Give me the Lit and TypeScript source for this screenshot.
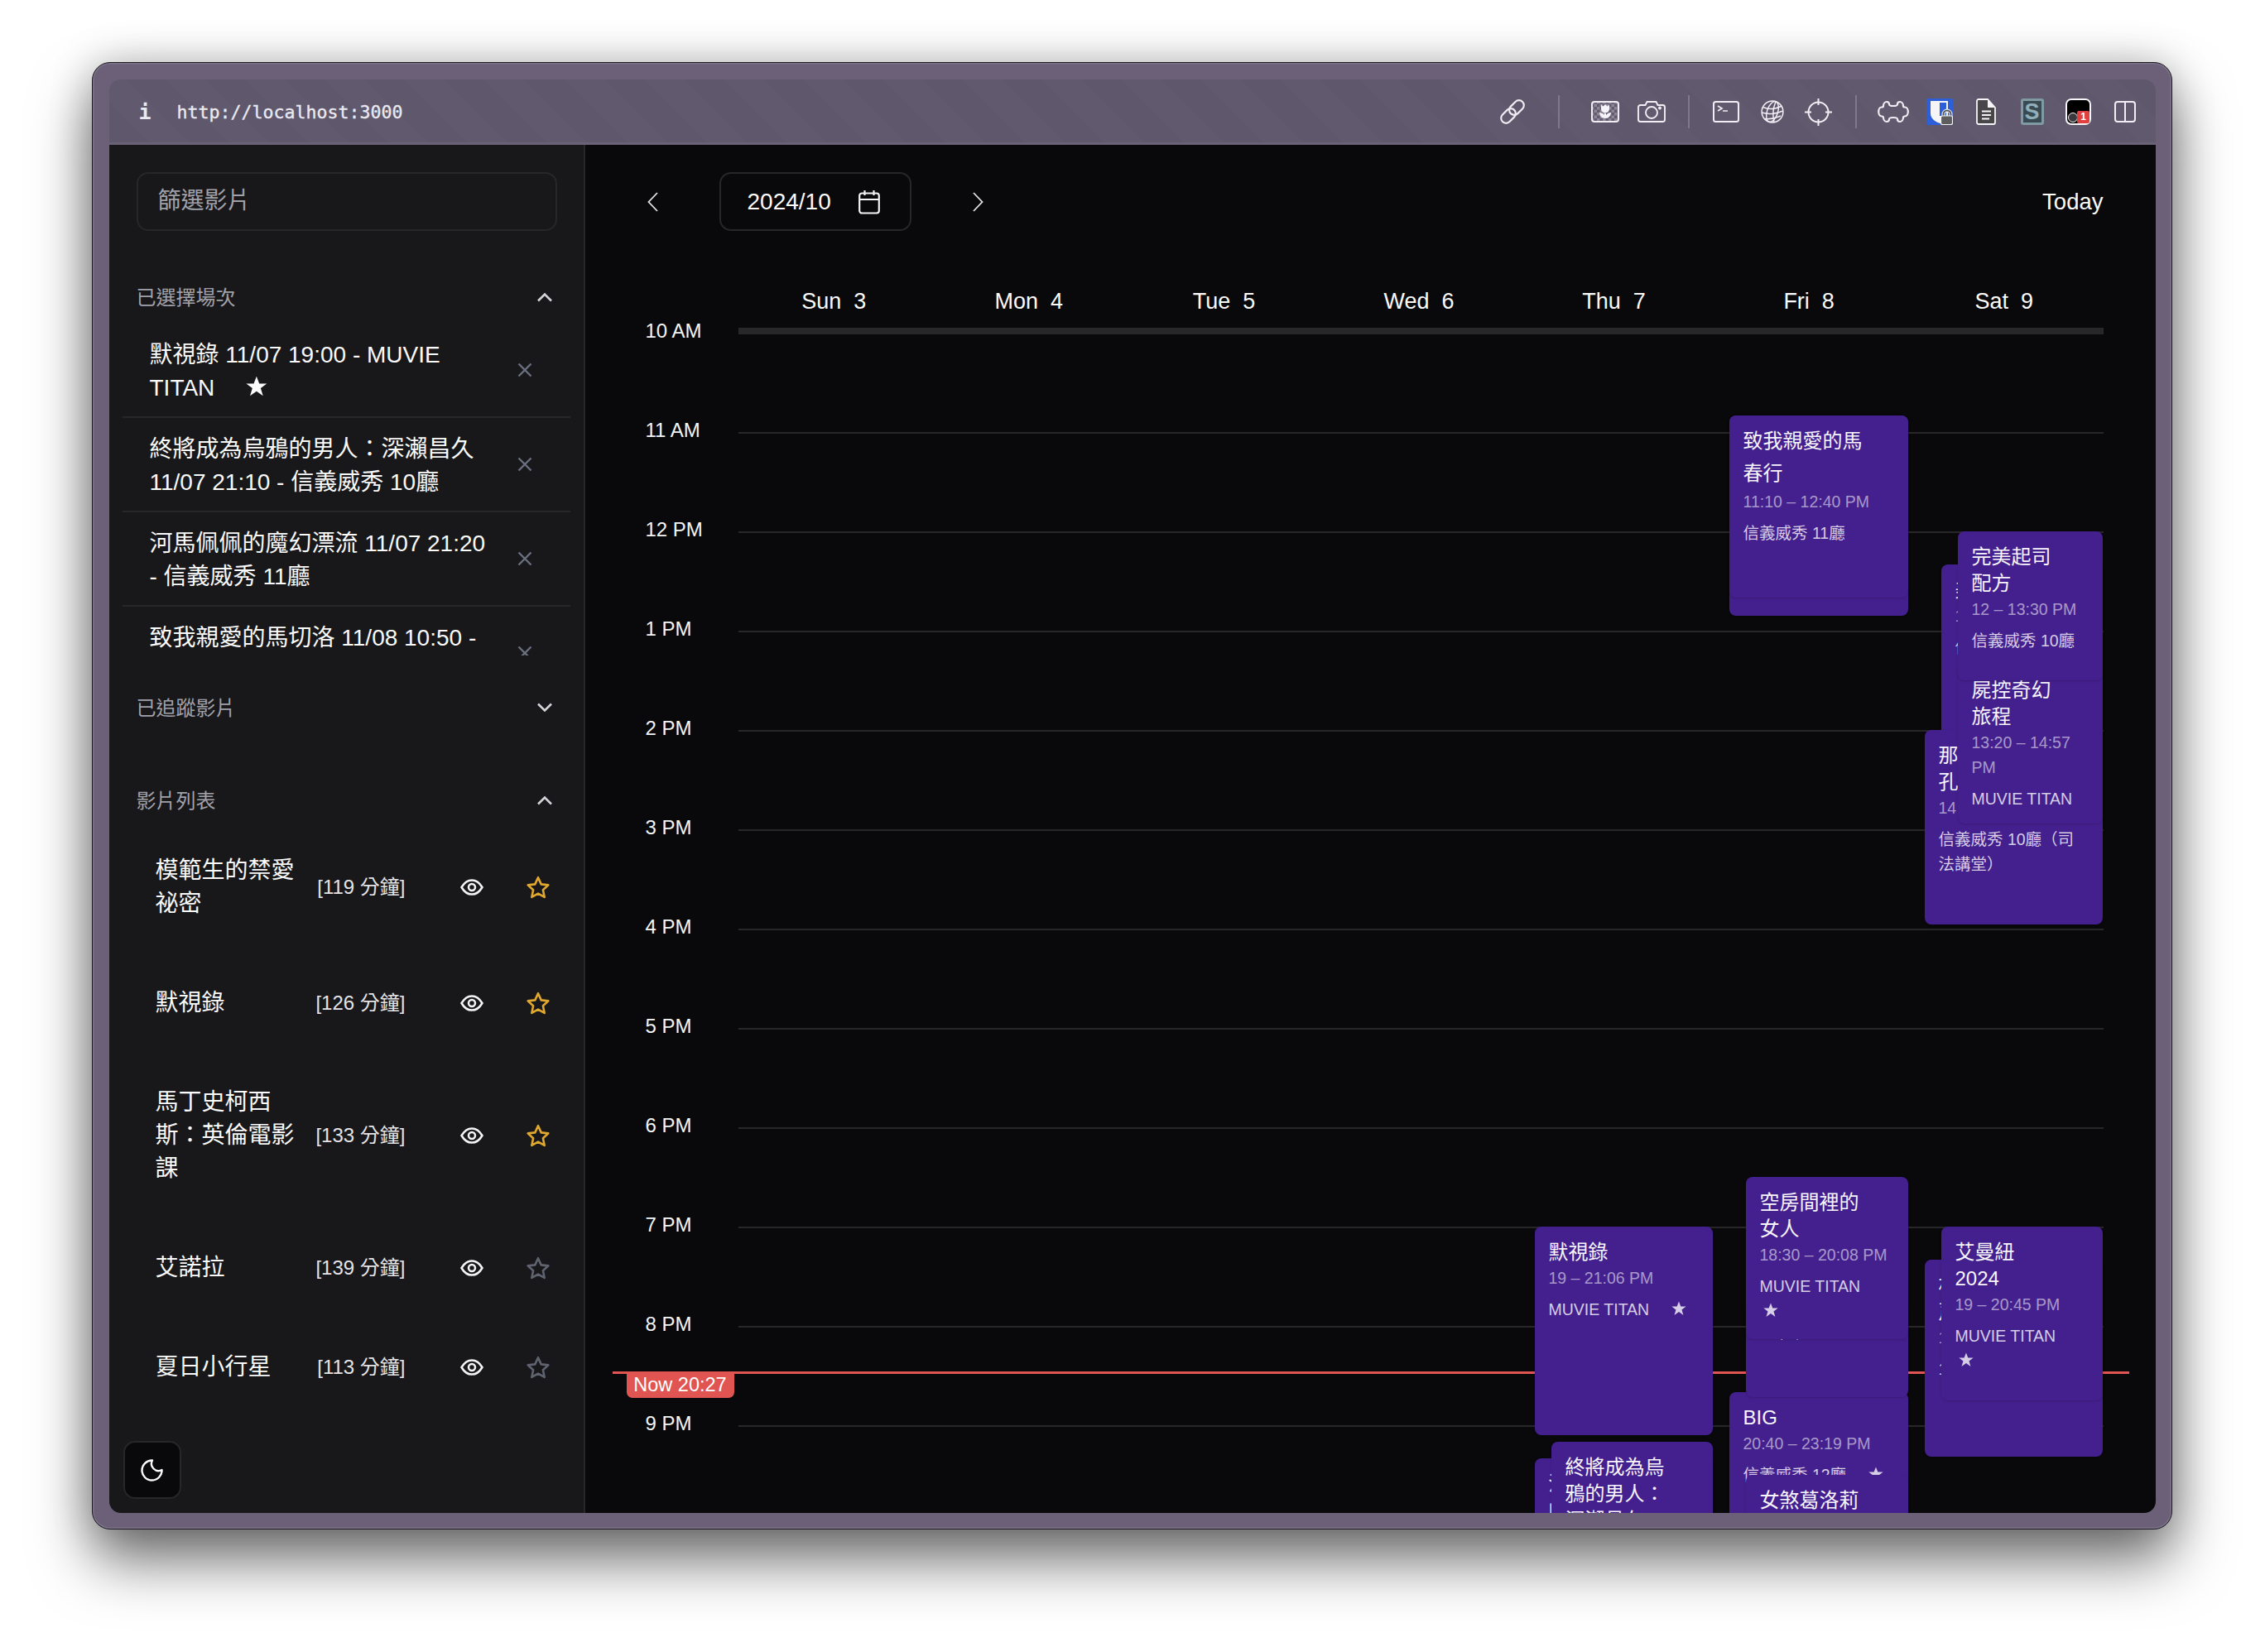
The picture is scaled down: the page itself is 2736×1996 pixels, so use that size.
import { LitElement, html, css, svg } from 'lit';
import { customElement } from 'lit/decorators.js';

// origin of the calendar canvas inside the page
const ORIGIN_X = 707;
const ORIGIN_Y = 396;

const HOURS = ['10 AM', '11 AM', '12 PM', '1 PM', '2 PM', '3 PM', '4 PM', '5 PM', '6 PM', '7 PM', '8 PM', '9 PM'];
const DAYS = ['Sun  3', 'Mon  4', 'Tue  5', 'Wed  6', 'Thu  7', 'Fri  8', 'Sat  9'];

const SELECTED = [
  { text: '默視錄 11/07 19:00 - MUVIE TITAN', star: true },
  { text: '終將成為烏鴉的男人：深瀨昌久 11/07 21:10 - 信義威秀 10廳', star: false },
  { text: '河馬佩佩的魔幻漂流 11/07 21:20 - 信義威秀 11廳', star: false },
  { text: '致我親愛的馬切洛 11/08 10:50 - 信義威秀 11廳', star: false },
];

const FILMS = [
  { title: '模範生的禁愛祕密', mins: '[119 分鐘]', fav: true },
  { title: '默視錄', mins: '[126 分鐘]', fav: true },
  { title: '馬丁史柯西斯：英倫電影課', mins: '[133 分鐘]', fav: true },
  { title: '艾諾拉', mins: '[139 分鐘]', fav: false },
  { title: '夏日小行星', mins: '[113 分鐘]', fav: false },
];

interface CalEvent {
  x: number;
  y: number;
  w: number;
  h: number;
  title?: string[];
  time?: string;
  venue?: string;
  star?: boolean;
  pad?: number;
  lh?: number;
}

// painted in order, later ones lie over earlier ones
const EVENTS: CalEvent[] = [
  { x: 2089, y: 502, w: 216, h: 242 },
  { x: 2089, y: 502, w: 216, h: 220, title: ['致我親愛的馬', '春行'], time: '11:10 – 12:40 PM', venue: '信義威秀 11廳', pad: 11, lh: 39 },

  { x: 2345, y: 682, w: 195, h: 300, title: ['美'], time: '1', venue: '信義威秀 10廳（司法講堂）' },
  { x: 2325, y: 882, w: 215, h: 235, title: ['那', '孔'], time: '14', venue: '信義威秀 10廳（司法講堂）' },
  { x: 2365, y: 803, w: 175, h: 192, title: ['屍控奇幻', '旅程'], time: '13:20 – 14:57 PM', venue: 'MUVIE TITAN' },
  { x: 2365, y: 642, w: 175, h: 180, title: ['完美起司', '配方'], time: '12 – 13:30 PM', venue: '信義威秀 10廳' },

  { x: 1854, y: 1482, w: 215, h: 252, title: ['默視錄'], time: '19 – 21:06 PM', venue: 'MUVIE TITAN', star: true },
  { x: 1854, y: 1762, w: 215, h: 200, title: ['河馬佩佩', '的魔幻漂流'], time: '21:20 – 23:00 PM' },
  { x: 1874, y: 1742, w: 195, h: 200, title: ['終將成為烏', '鴉的男人：', '深瀨昌久'] },

  { x: 2089, y: 1682, w: 216, h: 200, title: ['BIG'], time: '20:40 – 23:19 PM', venue: '信義威秀 12廳', star: true },
  { x: 2109, y: 1578, w: 196, h: 110, title: ['二人'] },
  { x: 2109, y: 1422, w: 196, h: 196, title: ['空房間裡的', '女人'], time: '18:30 – 20:08 PM', venue: 'MUVIE TITAN', star: true },
  { x: 2109, y: 1782, w: 196, h: 200, title: ['女煞葛洛莉'] },

  { x: 2325, y: 1522, w: 215, h: 238, title: ['相', '声'], time: '1', venue: '1' },
  { x: 2345, y: 1482, w: 195, h: 210, title: ['艾曼紐', '2024'], time: '19 – 20:45 PM', venue: 'MUVIE TITAN', star: true },
];

const starFilled = svg`<svg class="inline-star" viewBox="0 0 24 24"><path fill="currentColor" d="M12 .8l3.1 8h8.500l-6.900 5.200 2.600 8.600L12 17.400l-7.300 5.200 2.600-8.600L.4 8.800h8.500z"/></svg>`;
const starOutline = svg`<svg viewBox="0 0 30 28" width="30" height="28"><path fill="none" stroke="currentColor" stroke-width="2.600" stroke-linejoin="round" d="M15 2.200l3.700 8.200 8.600 1-6.400 5.900 1.800 8.600L15 21.600l-7.700 4.300 1.800-8.600-6.400-5.900 8.600-1z"/></svg>`;
const eye = svg`<svg viewBox="0 0 28 20" width="28" height="20" fill="none" stroke="#f4f4f5" stroke-width="2.500"><path d="M1.500 10C5 4 9 1.400 14 1.400S23 4 26.500 10C23 16 19 18.600 14 18.600S5 16 1.500 10Z"/><circle cx="14" cy="10" r="4"/></svg>`;
const cross = svg`<svg viewBox="0 0 18 18" width="18" height="18"><path d="M1.500 1.500l15 15M16.500 1.500l-15 15" stroke="#6b7080" stroke-width="2.400" fill="none"/></svg>`;
const chevUp = svg`<svg viewBox="0 0 20 12" width="20" height="12"><path d="M2 10.500l8-8 8 8" stroke="#d4d4d8" stroke-width="2.600" fill="none"/></svg>`;
const chevDown = svg`<svg viewBox="0 0 20 12" width="20" height="12"><path d="M2 1.500l8 8 8-8" stroke="#d4d4d8" stroke-width="2.600" fill="none"/></svg>`;
const moon = svg`<svg viewBox="0 0 28 28" width="28" height="28"><path d="M14 2.500a8.500 8.500 0 0 0 11.500 11.500A12 12 0 1 1 14 2.500Z" stroke="#fafafa" stroke-width="2.400" fill="none" stroke-linejoin="round"/></svg>`;
const calendar = svg`<svg viewBox="0 0 26 30" width="26" height="30" fill="none" stroke="#f4f4f5" stroke-width="2.200"><rect x="1.200" y="4.500" width="23.600" height="24" rx="3"/><path d="M1.200 12h23.600M7.500 1v6M18.500 1v6"/></svg>`;
const prevIcon = svg`<svg viewBox="0 0 13 24" width="13" height="24"><path d="M12 1L1.500 12 12 23" stroke="#e4e4e7" stroke-width="1.800" fill="none"/></svg>`;
const nextIcon = svg`<svg viewBox="0 0 13 24" width="13" height="24"><path d="M1 1l10.500 11L1 23" stroke="#e4e4e7" stroke-width="1.800" fill="none"/></svg>`;

const tb = {
  link: svg`<svg viewBox="0 0 30 30" width="30" height="30" fill="none" stroke="#eeecf2" stroke-width="2.200"><g transform="rotate(-45 15 15)"><rect x="-2" y="9" width="20" height="12" rx="6"/><rect x="12" y="9" width="20" height="12" rx="6"/></g></svg>`,
  image: svg`<svg viewBox="0 0 34 26" width="34" height="26"><defs><pattern id="chk" width="7" height="7" patternUnits="userSpaceOnUse"><rect width="7" height="7" fill="#625a6e"/><rect width="3.500" height="3.500" fill="#8d8696"/><rect x="3.500" y="3.500" width="3.500" height="3.500" fill="#8d8696"/></pattern></defs><rect x="1" y="1" width="32" height="24" rx="3" fill="url(#chk)" stroke="#f0eef4" stroke-width="2"/><path fill="#f6f4f9" d="M12 4.500l2.500 2 2.500-2.500 2.500 2.500 2.500-2v5a5 5 0 0 1-10 0zM16 15h2v2c1.500-2 3.500-3 6-3 0 3.500-2.500 7-7 7s-7-3.500-7-7c2.500 0 4.500 1 6 3z"/></svg>`,
  camera: svg`<svg viewBox="0 0 34 26" width="34" height="26" fill="none" stroke="#f0eef4" stroke-width="1.900"><path d="M3.500 5h6l2-4h11l2 4h6a2.500 2.500 0 0 1 2.500 2.500v15a2.500 2.500 0 0 1-2.500 2.500h-27a2.500 2.500 0 0 1-2.500-2.500v-15a2.500 2.500 0 0 1 2.500-2.500z"/><circle cx="17" cy="14" r="7"/><circle cx="27" cy="8.500" r="1" fill="#f0eef4"/></svg>`,
  terminal: svg`<svg viewBox="0 0 32 26" width="32" height="26" fill="none" stroke="#f0eef4" stroke-width="2"><rect x="1" y="1" width="30" height="24" rx="2.500"/><path d="M6 6l5 3-5 3M12 12h6" stroke-width="1.700"/></svg>`,
  globe: svg`<svg viewBox="0 0 28 28" width="28" height="28" fill="none" stroke="#f0eef4" stroke-width="1.500"><circle cx="14" cy="14" r="12.900"/><ellipse cx="14" cy="14" rx="6.500" ry="12.900" transform="rotate(18 14 14)"/><path d="M18 1.800c-3 7-4 16-2 25M2.500 8.500c7 3 16 2 23-1.500M1.200 15c8 2.500 17 1.500 25.500-2M4.500 22.500c6 .5 13-.5 19.500-3.500"/></svg>`,
  crosshair: svg`<svg viewBox="0 0 33 33" width="33" height="33" fill="none" stroke="#f0eef4" stroke-width="2"><circle cx="16.500" cy="16.500" r="12"/><path d="M16.500 0v8M16.500 25v8M0 16.500h8M25 16.500h8"/></svg>`,
  puzzle: svg`<svg viewBox="0 0 38 28" width="38" height="28" fill="none" stroke="#f0eef4" stroke-width="2.200"><path d="M11 2c2 0 3 1.500 3 3 0 1 1 2 5 2s5-1 5-2c0-1.500 1-3 3-3s4 2 4 5c0 1 1 1.500 2 1.500 2.500 0 3.800 2.800 3.800 5.500s-1.300 5.500-3.800 5.500c-1 0-2 .5-2 1.500 0 3-2 5-4 5s-3-1.500-3-3c0-1-1-2-5-2s-5 1-5 2c0 1.500-1 3-3 3s-4-2-4-5c0-1-1-1.500-2-1.500C2.500 19.500 1.200 16.700 1.200 14S2.500 8.500 5 8.500c1 0 2-.5 2-1.500 0-3 2-5 4-5z"/></svg>`,
  vault: svg`<svg viewBox="0 0 32 32" width="32" height="32"><rect width="32" height="32" rx="2" fill="#2c5fd8"/><path d="M5 3h21v18c0 5-6 8-9 9-5-1-12-5-12-12z" fill="#f5f5f7"/><rect x="16" y="5" width="8" height="16" fill="#2c5fd8"/><path d="M20.500 22v-3a4.500 4.500 0 0 1 9 0v3" fill="none" stroke="#f5f5f7" stroke-width="4"/><path d="M20.500 22v-3a4.500 4.500 0 0 1 9 0v3" fill="none" stroke="#5d5d60" stroke-width="2"/><rect x="17.500" y="21" width="14" height="10.500" rx="2" fill="#5d5d60" stroke="#f5f5f7" stroke-width="1.200"/></svg>`,
  doc: svg`<svg viewBox="0 0 24 32" width="24" height="32"><path d="M1 3a2 2 0 0 1 2-2h11l9 10v18a2 2 0 0 1-2 2H3a2 2 0 0 1-2-2z" fill="#474749" stroke="#f5f5f7" stroke-width="1.800"/><path d="M14 1v10h9z" fill="#f5f5f7"/><path d="M7 15.500h11M7 20h11M7 24.500h9" stroke="#f5f5f7" stroke-width="1.800"/></svg>`,
  split: svg`<svg viewBox="0 0 26 26" width="26" height="26" fill="none" stroke="#f0eef4" stroke-width="2"><rect x="1" y="1" width="24" height="24" rx="3"/><path d="M13 1v24"/></svg>`,
};

@customElement('app-root')
export class AppRoot extends LitElement {
  static styles = css`
    :host {
      display: block;
      box-sizing: border-box;
      height: 1996px;
      padding: 75px 112px 148px 111px;
      background: #fff;
      font-family: "Liberation Sans", "Noto Sans CJK TC", sans-serif;
      color: #fafafa;
      overflow: hidden;
    }
    .window {
      height: 100%;
      box-sizing: border-box;
      padding: 19.5px 19.5px 19.5px;
      border-radius: 22px;
      background: #6b6078;
      border: 1.5px solid #1c1a20;
      box-shadow: inset 0 0 0 1.5px rgba(255, 255, 255, 0.12), 0 38px 70px rgba(0, 0, 0, 0.55), 0 0 50px rgba(0, 0, 0, 0.22);
    }
    .inner {
      height: 100%;
      display: flex;
      flex-direction: column;
      border-radius: 14px;
      overflow: hidden;
    }
    .toolbar {
      flex: none;
      height: 79px;
      box-sizing: border-box;
      display: flex;
      align-items: center;
      padding: 3px 9px 0 36px;
      border-bottom: 3px solid #6a6276;
      background: repeating-linear-gradient(45deg, #5f576b 0 34px, #61596d 34px 68px);
      font-family: "DejaVu Sans Mono", monospace;
      font-size: 21.6px;
      color: #ebe9f0;
    }
    .info { font-weight: 700; width: 46px; font-size: 25px; }
    .url { -webkit-text-stroke: 0.35px #ebe9f0; }
    .tools { margin-left: auto; display: flex; align-items: center; height: 100%; }
    .tool { width: 56px; display: flex; align-items: center; justify-content: center; }
    .sep { width: 2px; height: 40px; background: #80788c; margin: 0 16px; }
    .sep.wide { margin: 0 27px; }
    .s-logo {
      position: relative;
      width: 28px;
      height: 32px;
      box-sizing: border-box;
      border-radius: 3px;
      border: 3px solid #7f9aa3;
      background: #3a4a52;
      display: flex;
      align-items: center;
      justify-content: center;
      font: 700 27px "Liberation Sans", sans-serif;
      color: #8fb0ba;
    }
    .blocker {
      position: relative;
      width: 31px;
      height: 32px;
      box-sizing: border-box;
      border: 2px solid #f5f5f7;
      border-radius: 7px;
      background: #000;
    }
    .blocker .dot {
      position: absolute;
      left: 1px;
      bottom: 1px;
      width: 12px;
      height: 12px;
      box-sizing: border-box;
      border-radius: 50%;
      background: #3a3a3e;
      border: 1.5px solid #f5f5f7;
    }
    .blocker .badge {
      position: absolute;
      right: 0;
      bottom: 0;
      width: 15px;
      height: 15px;
      border-radius: 2px;
      background: #e2403e;
      color: #fff;
      font: 700 12px/15px "Liberation Sans", sans-serif;
      text-align: center;
    }

    .body { flex: 1; min-height: 0; display: flex; }
    .sidebar {
      position: relative;
      flex: none;
      width: 575px;
      box-sizing: border-box;
      padding: 33px 32px 0 33px;
      background: #18181b;
      border-right: 2px solid #27272a;
      overflow: hidden;
    }
    .filter {
      display: block;
      width: 508px;
      height: 71px;
      box-sizing: border-box;
      padding: 0 24px;
      background: transparent;
      border: 2px solid #27272a;
      border-radius: 14px;
      font: inherit;
      font-size: 28px;
      color: #fafafa;
      outline: none;
    }
    .filter::placeholder { color: #a1a1aa; opacity: 1; }
    .section {
      height: 40px;
      display: flex;
      align-items: center;
      justify-content: space-between;
      padding-right: 5px;
      font-size: 24px;
      color: #a1a1aa;
    }
    .section span { margin-bottom: 3px; }
    .section.first { margin-top: 60px; }
    .section.second { margin-top: 43px; }
    .section.third { margin-top: 72px; }
    .picked {
      margin: 12px -16px 0 -17px;
      height: 401px;
      overflow: hidden;
    }
    .pick {
      display: flex;
      align-items: center;
      padding: 16px 0 16px 33px;
      border-bottom: 2px solid #27272a;
    }
    .pick:last-child { border-bottom: none; }
    .pick-text { position: relative; top: 2px; width: 420px; font-size: 28px; line-height: 40px; white-space: pre-wrap; }
    .pick-x { margin-left: 24px; display: flex; }
    .films { margin: 5px -32px 0 -33px; }
    .film {
      display: grid;
      grid-template-columns: 172px 130px 94px 81px;
      align-items: center;
      padding: 40px 0 40px 56px;
      font-size: 28px;
      line-height: 40px;
    }
    .mins { font-size: 24px; text-align: right; white-space: nowrap; color: #e4e4e7; }
    .eye { justify-self: end; display: flex; }
    .fav { justify-self: end; display: flex; color: #5f6370; }
    .fav.on { color: #e0a82e; }
    .theme {
      position: absolute;
      left: 17px;
      bottom: 17px;
      width: 70px;
      height: 70px;
      box-sizing: border-box;
      display: flex;
      align-items: center;
      justify-content: center;
      border-radius: 14px;
      border: 2px solid #27272a;
      background: #09090b;
    }

    .main { flex: 1; min-width: 0; background: #09090b; overflow: hidden; }
    .head { display: flex; align-items: center; height: 71px; margin-top: 33px; padding: 0 63px 0 75px; }
    .nav { display: flex; padding-top: 2px; }
    .date {
      box-sizing: border-box;
      width: 232px;
      height: 71px;
      margin: 0 74px;
      padding: 2px 36px 0 32px;
      display: flex;
      align-items: center;
      justify-content: space-between;
      border: 2px solid #27272a;
      border-radius: 14px;
      font-size: 28px;
    }
    .today { margin-left: auto; padding-top: 2px; font-size: 27.500px; }
    .days {
      display: grid;
      grid-template-columns: repeat(7, 1fr);
      margin-top: 65px;
      height: 52px;
      padding: 0 65px 0 183px;
      box-sizing: border-box;
    }
    .day { font-size: 27px; line-height: 40px; text-align: center; white-space: pre; }
    .canvas { position: relative; }
    .hour { display: flex; height: 120px; padding-right: 63px; }
    .hour.top { height: 126px; }
    .hour-label {
      flex: none;
      width: 112px;
      margin-left: 73px;
      margin-top: -18px;
      font-size: 24px;
      line-height: 32px;
      height: 32px;
      color: #f4f4f5;
    }
    .hour.top .hour-label { margin-top: -12px; }
    .hour-line { flex: 1; height: 2px; background: #27272a; }
    .hour.top .hour-line { height: 8px; }
    .now-line { position: absolute; left: 33px; width: 1832px; top: 1261px; height: 3px; background: #e05552; }
    .now-tag {
      position: absolute;
      left: 50px;
      top: 1264px;
      width: 130px;
      height: 29px;
      border-radius: 0 0 7px 7px;
      background: #e05552;
      color: #fff;
      font-size: 23.500px;
      line-height: 27px;
      text-align: center;
    }
    .event {
      position: absolute;
      box-sizing: border-box;
      padding: 15px 17px;
      border-radius: 8px;
      background: #44208e;
      box-shadow: 0 1px 3px rgba(0, 0, 0, 0.18);
      overflow: hidden;
    }
    .event-title { font-size: 24px; line-height: 32px; color: #f7f5fc; white-space: nowrap; }
    .event-time { font-size: 19.500px; line-height: 30px; color: rgba(255, 255, 255, 0.55); }
    .event-venue { margin-top: 8px; font-size: 19.500px; line-height: 30px; color: rgba(255, 255, 255, 0.78); white-space: pre-wrap; }
    .inline-star { width: 0.92em; height: 0.92em; margin-left: 0.25em; vertical-align: -0.08em; }
  `;

  renderToolbar() {
    const cell = (icon: unknown) => html`<div class="tool">${icon}</div>`;
    return html`
      <div class="toolbar">
        <span class="info">i</span>
        <span class="url">http://localhost:3000</span>
        <div class="tools">
          ${cell(tb.link)}
          <div class="sep wide"></div>
          ${cell(tb.image)} ${cell(tb.camera)}
          <div class="sep"></div>
          ${cell(tb.terminal)} ${cell(tb.globe)} ${cell(tb.crosshair)}
          <div class="sep"></div>
          ${cell(tb.puzzle)} ${cell(tb.vault)} ${cell(tb.doc)}
          ${cell(html`<div class="s-logo">S</div>`)}
          ${cell(html`<div class="blocker"><span class="dot"></span><span class="badge">1</span></div>`)}
          ${cell(tb.split)}
        </div>
      </div>
    `;
  }

  renderSidebar() {
    return html`
      <aside class="sidebar">
        <input class="filter" placeholder="篩選影片" />
        <div class="section first"><span>已選擇場次</span>${chevUp}</div>
        <div class="picked">
          ${SELECTED.map(
            (p) => html`
              <div class="pick">
                <div class="pick-text">${p.text}${p.star ? html`    ${starFilled}` : ''}</div>
                <div class="pick-x">${cross}</div>
              </div>
            `
          )}
        </div>
        <div class="section second"><span>已追蹤影片</span>${chevDown}</div>
        <div class="section third"><span>影片列表</span>${chevUp}</div>
        <div class="films">
          ${FILMS.map(
            (f) => html`
              <div class="film">
                <div>${f.title}</div>
                <div class="mins">${f.mins}</div>
                <div class="eye">${eye}</div>
                <div class="fav ${f.fav ? 'on' : ''}">${starOutline}</div>
              </div>
            `
          )}
        </div>
        <div class="theme">${moon}</div>
      </aside>
    `;
  }

  renderEvent(e: CalEvent) {
    const pos = `left:${e.x - ORIGIN_X}px;top:${e.y - ORIGIN_Y}px;width:${e.w}px;height:${e.h}px;${e.pad ? `padding-top:${e.pad}px;` : ''}`;
    return html`
      <div class="event" style=${pos}>
        ${e.title
          ? html`<div class="event-title" style=${e.lh ? `line-height:${e.lh}px` : ''}>
              ${e.title.map((line) => html`<div>${line}</div>`)}
            </div>`
          : ''}
        ${e.time ? html`<div class="event-time">${e.time}</div>` : ''}
        ${e.venue ? html`<div class="event-venue">${e.venue}${e.star ? html`    ${starFilled}` : ''}</div>` : ''}
      </div>
    `;
  }

  renderMain() {
    return html`
      <main class="main">
        <div class="head">
          <div class="nav">${prevIcon}</div>
          <div class="date"><span>2024/10</span>${calendar}</div>
          <div class="nav">${nextIcon}</div>
          <div class="today">Today</div>
        </div>
        <div class="days">${DAYS.map((d) => html`<div class="day">${d}</div>`)}</div>
        <div class="canvas">
          ${HOURS.map(
            (h, i) => html`
              <div class="hour ${i === 0 ? 'top' : ''}">
                <div class="hour-label">${h}</div>
                <div class="hour-line"></div>
              </div>
            `
          )}
          <div class="now-line"></div>
          <div class="now-tag">Now 20:27</div>
          ${EVENTS.map((e) => this.renderEvent(e))}
        </div>
      </main>
    `;
  }

  render() {
    return html`
      <div class="window">
        <div class="inner">
          ${this.renderToolbar()}
          <div class="body">${this.renderSidebar()} ${this.renderMain()}</div>
        </div>
      </div>
    `;
  }
}
